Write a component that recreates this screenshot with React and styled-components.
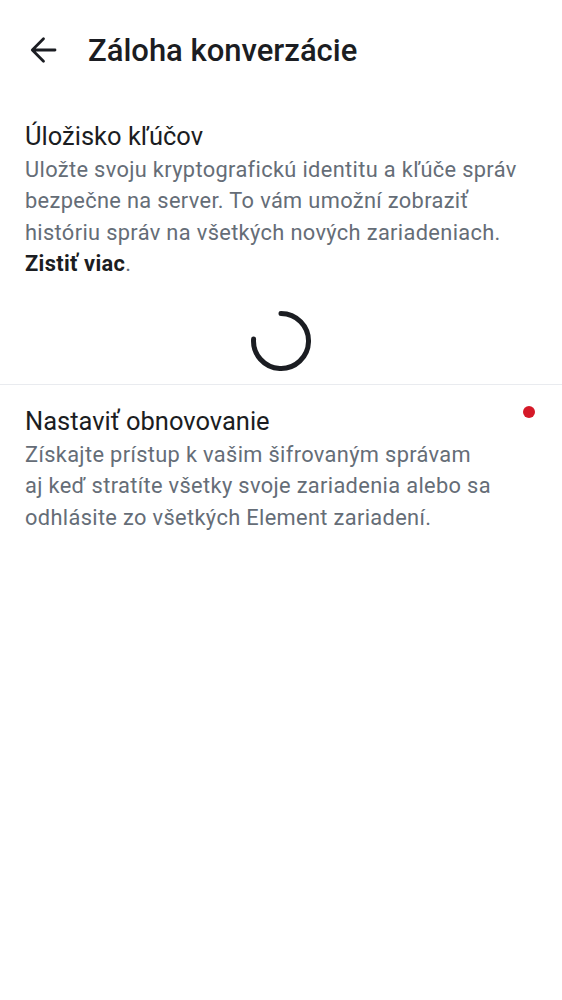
import React from "react";
import styled, { createGlobalStyle } from "styled-components";

const GlobalStyle = createGlobalStyle`
  html, body {
    margin: 0;
    padding: 0;
    background: #fff;
  }
  body {
    font-family: Roboto, "Noto Sans", sans-serif;
    -webkit-font-smoothing: antialiased;
  }
`;

const Screen = styled.div`
  width: 562px;
  min-height: 1000px;
  background: #fff;
  color: #1b1d22;
`;

const TopBar = styled.header`
  height: 100px;
  display: flex;
  align-items: center;
  padding: 0 0 0 28px;
  gap: 30px;
  box-sizing: border-box;
`;

const BackButton = styled.button`
  border: none;
  background: none;
  padding: 0;
  width: 30px;
  height: 30px;
  display: flex;
  align-items: center;
  justify-content: center;
  color: #1b1d22;
`;

const Title = styled.h1`
  margin: 0;
  font-size: 31px;
  font-weight: 500;
  letter-spacing: 0;
`;

const Section = styled.section`
  position: relative;
  padding: ${(p) => p.$pad || "20px 25px 0"};
  border-top: ${(p) => (p.$divided ? "1px solid #e9ebef" : "none")};
`;

const SectionTitle = styled.h2`
  margin: 0 0 2px;
  font-size: 25.5px;
  font-weight: 400;
  line-height: 32px;
  color: #1b1d22;
`;

const Body = styled.p`
  margin: 0;
  font-size: 21.8px;
  letter-spacing: 0.35px;
  line-height: 31.3px;
  color: #656d77;
  white-space: nowrap;
`;

const LinkText = styled.strong`
  color: #1b1d22;
  font-weight: 700;
`;

const Dot = styled.span`
  position: absolute;
  top: 21px;
  right: 27px;
  width: 12px;
  height: 12px;
  border-radius: 50%;
  background: #d51928;
`;

const SpinnerRow = styled.div`
  display: flex;
  justify-content: center;
  padding: 29px 0 10px;
`;

const ArrowIcon = () => (
  <svg width="30" height="30" viewBox="0 0 30 30" fill="none">
    <path
      d="M27 15H4.5M15.5 3.8L4.3 15l11.2 11.2"
      stroke="currentColor"
      strokeWidth="2.8"
      strokeLinecap="round"
      strokeLinejoin="round"
    />
  </svg>
);

const Spinner = () => (
  <svg width="66" height="66" viewBox="0 0 66 66">
    <path
      d="M33 5.5 A27.5 27.5 0 1 1 5.6 31"
      fill="none"
      stroke="#1b1d22"
      strokeWidth="5"
      strokeLinecap="round"
    />
  </svg>
);

export default function App() {
  return (
    <>
      <GlobalStyle />
      <Screen>
        <TopBar>
          <BackButton aria-label="Späť">
            <ArrowIcon />
          </BackButton>
          <Title>Záloha konverzácie</Title>
        </TopBar>

        <Section>
          <SectionTitle>Úložisko kľúčov</SectionTitle>
          <Body>
            Uložte svoju kryptografickú identitu a kľúče správ
            <br />
            bezpečne na server. To vám umožní zobraziť
            <br />
            históriu správ na všetkých nových zariadeniach.
            <br />
            <LinkText>Zistiť viac</LinkText>.
          </Body>
          <SpinnerRow>
            <Spinner />
          </SpinnerRow>
        </Section>

        <Section $divided $pad="20px 25px 0">
          <Dot />
          <SectionTitle>Nastaviť obnovovanie</SectionTitle>
          <Body>
            Získajte prístup k vašim šifrovaným správam
            <br />
            aj keď stratíte všetky svoje zariadenia alebo sa
            <br />
            odhlásite zo všetkých Element zariadení.
          </Body>
        </Section>
      </Screen>
    </>
  );
}
